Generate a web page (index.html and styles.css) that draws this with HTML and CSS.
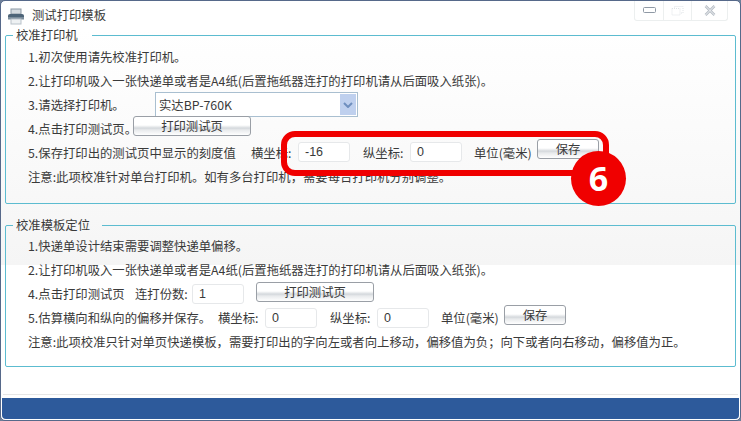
FILE: index.html
```html
<!DOCTYPE html>
<html lang="zh-CN">
<head>
<meta charset="utf-8">
<title>测试打印模板</title>
<link rel="stylesheet" href="styles.css">
</head>
<body>
<div class="window">
  <header class="titlebar">
    <svg class="app-icon" width="18" height="17" viewBox="0 0 18 17">
      <rect x="4" y="1" width="10" height="5" fill="#d5dbe0" stroke="#8c99a5" stroke-width="1"/>
      <path d="M1 7.5 Q1 6 3 6 H15 Q17 6 17 7.5 V11 H1 Z" fill="#4d6478"/>
      <rect x="1" y="9" width="16" height="2.5" fill="#7b8d9c"/>
      <rect x="4" y="11" width="10" height="5" fill="#eef1f3" stroke="#b9c2ca" stroke-width="1"/>
    </svg>
    <span class="title">测试打印模板</span>
    <div class="caption">
      <span class="cap-btn"><svg width="13" height="7" viewBox="0 0 13 7"><rect x="0.5" y="0.5" width="12" height="5" rx="1" fill="none" stroke="#8f99a5"/></svg></span>
      <span class="cap-btn"><svg width="13" height="11" viewBox="0 0 13 11"><path d="M3.5 3.5V1.500H12V8H9M1 3.500H9V10H1Z" fill="none" stroke="#dfe3e6" stroke-dasharray="1 1"/></svg></span>
      <span class="cap-btn cap-close"><svg width="12" height="11" viewBox="0 0 12 11"><path d="M1.500 1 L10.500 10 M10.500 1 L1.500 10" stroke="#b5bcc4" stroke-width="2.500" fill="none"/><path d="M1.500 1 L10.500 10 M10.500 1 L1.500 10" stroke="#fff" stroke-width="0.800" fill="none"/></svg></span>
    </div>
  </header>

  <fieldset class="group group-printer">
    <legend>校准打印机</legend>
    <div class="row">1.初次使用请先校准打印机。</div>
    <div class="row">2.让打印机吸入一张快递单或者是A4纸(后置拖纸器连打的打印机请从后面吸入纸张)。</div>
    <div class="row">
      <span class="w-select-label">3.请选择打印机。</span>
      <div class="select"><span class="select-text">实达BP-760K</span><span class="select-arrow"><svg width="10" height="6" viewBox="0 0 10 6"><path d="M1 1 L5 5 L9 1" fill="none" stroke="#6f8fbe" stroke-width="2"/></svg></span></div>
    </div>
    <div class="row">
      <span class="w-print-label">4.点击打印测试页。</span>
      <button class="btn btn-print btn-up-md">打印测试页</button>
    </div>
    <div class="row">
      <span class="w-scale-label">5.保存打印出的测试页中显示的刻度值</span>
      <span class="coord">横坐标:</span>
      <span class="input input-up">-16</span>
      <span class="coord coord-y">纵坐标:</span>
      <span class="input input-up">0</span>
      <span class="unit">单位(毫米)</span>
      <button class="btn btn-save btn-up-lg">保存</button>
    </div>
    <div class="row">注意:此项校准针对单台打印机。如有多台打印机，需要每台打印机分别调整。</div>
  </fieldset>

  <fieldset class="group group-template">
    <legend>校准模板定位</legend>
    <div class="row">1.快递单设计结束需要调整快递单偏移。</div>
    <div class="row">2.让打印机吸入一张快递单或者是A4纸(后置拖纸器连打的打印机请从后面吸入纸张)。</div>
    <div class="row">
      <span class="w-copies-label">4.点击打印测试页</span>
      <span class="w-copies">连打份数:</span>
      <span class="input">1</span>
      <button class="btn btn-print btn-print-2 btn-up-sm">打印测试页</button>
    </div>
    <div class="row">
      <span class="w-estimate-label">5.估算横向和纵向的偏移并保存。</span>
      <span class="coord">横坐标:</span>
      <span class="input">0</span>
      <span class="coord coord-y">纵坐标:</span>
      <span class="input">0</span>
      <span class="unit">单位(毫米)</span>
      <button class="btn btn-save btn-up">保存</button>
    </div>
    <div class="row">注意:此项校准只针对单页快递模板，需要打印出的字向左或者向上移动，偏移值为负；向下或者向右移动，偏移值为正。</div>
  </fieldset>

  <div class="spacer"></div>
  <footer class="statusbar"></footer>

  <div class="callout"></div>
  <div class="callout-badge">6</div>
</div>
</body>
</html>
```
FILE: styles.css
```css
* { box-sizing: border-box; }
html, body { margin: 0; padding: 0; }
body {
  width: 741px;
  height: 421px;
  overflow: hidden;
  background: #6d7f99;
  font-family: "Noto Sans CJK SC", "Liberation Sans", sans-serif;
  font-size: 12.350px;
  color: #3a3a3a;
}
.window {
  position: relative;
  width: 741px;
  height: 421px;
  display: flex;
  flex-direction: column;
  border: 1px solid #56698a;
  border-radius: 5px;
  padding: 0 2px 1px;
  background: linear-gradient(#fff 0, #fff 30px, #f5f5f5 264px, #fff 264px);
}
.titlebar {
  height: 26px;
  flex: none;
  display: flex;
  align-items: flex-start;
  padding-left: 4px;
}
.app-icon { margin-top: 7px; flex: none; }
.title { margin-left: 7px; margin-top: 5px; line-height: 18px; }
.caption {
  margin-left: auto;
  margin-right: 10px;
  display: flex;
  height: 20px;
  border: 1px solid #ecefef;
  border-top: 0;
  border-radius: 0 0 3px 3px;
  background: #fff;
}
.cap-btn {
  width: 28px;
  display: flex;
  align-items: center;
  justify-content: center;
  border-left: 1px solid #ecefef;
}
.cap-btn:first-child { border-left: 0; }
.cap-close { width: 36px; }
.group {
  margin: 0 2px;
  flex: none;
  border: 1px solid #5cbcd0;
  border-radius: 2px;
  padding: 2px 0 0 22px;
  min-width: 0;
}
.group-printer { height: 177px; }
.group-template { height: 150px; margin-top: 13px; padding-top: 1px; }
.group legend {
  margin-left: -15px;
  padding: 0 14px 0 3px;
  line-height: 16px;
}
.group-template legend { padding-right: 12px; }
.row {
  height: 24px;
  display: flex;
  align-items: center;
  white-space: nowrap;
}
.w-select-label { width: 127px; flex: none; }
.w-print-label { width: 105px; flex: none; }
.w-scale-label { width: 223px; flex: none; }
.w-copies-label { width: 107px; flex: none; }
.w-copies { width: 57px; flex: none; }
.w-estimate-label { width: 190px; flex: none; }
.coord { width: 47px; flex: none; }
.coord-y { margin-left: 13px; }
.input {
  flex: none;
  width: 52px;
  height: 20px;
  line-height: 18px;
  padding-left: 6px;
  border: 1px solid #e6e8ea;
  border-radius: 3px;
  background: #fff;
  font-family: "Liberation Sans", sans-serif;
  font-size: 12.500px;
}
.input-up { margin-top: -2px; }
.unit { margin-left: 12px; width: 63px; flex: none; }
.select {
  width: 203px;
  height: 25px;
  margin-top: -1px;
  display: flex;
  align-items: center;
  border: 1px solid #a9bfd0;
  background: #fff;
  flex: none;
}
.select-text { padding-left: 3px; flex: 1; }
.select-arrow {
  width: 16px;
  height: 21px;
  display: flex;
  align-items: center;
  justify-content: center;
  background: #bfd0ee;
  margin-right: 1px;
}
.btn {
  flex: none;
  padding: 0;
  height: 20px;
  font: inherit;
  color: #3a3a3a;
  border: 1px solid #9a9fa6;
  border-radius: 3px;
  background: linear-gradient(#fff 0, #fff 45%, #d4d8dc 62%, #e8eaec 72%, #fff 100%);
  line-height: 16px;
}
.btn-print { width: 118px; }
.btn-print-2 { margin-left: 12px; }
.btn-save { width: 62px; }
.btn-up-sm { margin-top: -4px; }
.btn-up { margin-top: -6px; }
.btn-up-md { margin-top: -7px; }
.btn-up-lg { margin-top: -8px; }
.spacer {
  flex: 1;
  border-bottom: 1px solid #e6e6e6;
  margin-bottom: 3px;
}
.statusbar {
  height: 21px;
  flex: none;
  margin: 0 -1px;
  background: #2d5a9b;
  border-radius: 0 0 4px 4px;
}
.callout {
  position: absolute;
  left: 280px;
  top: 130px;
  width: 328px;
  height: 45px;
  border: 6px solid #f00000;
  border-radius: 14px;
}
.callout-badge {
  position: absolute;
  left: 570px;
  top: 150px;
  width: 55px;
  height: 55px;
  border-radius: 50%;
  background: #f00000;
  color: #fff;
  text-align: center;
  font-family: "Open Sans", "Liberation Sans", sans-serif;
  font-weight: 700;
  font-size: 34px;
  line-height: 55px;
}
```
